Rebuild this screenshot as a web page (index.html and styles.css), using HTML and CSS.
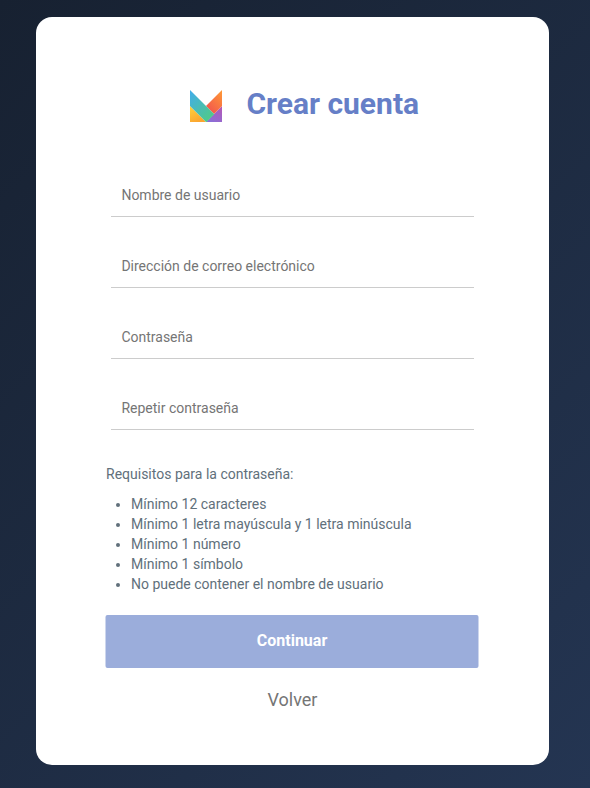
FILE: index.html
```html
<!DOCTYPE html>
<html lang="es">
<head>
<meta charset="utf-8">
<title>Crear cuenta</title>
<link rel="stylesheet" href="styles.css">
</head>
<body>
<main class="card">
  <header class="brand">
    <svg class="logo" viewBox="0 0 32 32" aria-hidden="true">
      <defs>
        <linearGradient id="band" x1="0" y1="0.1" x2="0.8" y2="1"><stop offset="0" stop-color="#42aee6"/><stop offset="1" stop-color="#50cb85"/></linearGradient>
        <linearGradient id="warm" x1="1" y1="0" x2="0.3" y2="1"><stop offset="0" stop-color="#ff9a35"/><stop offset="1" stop-color="#f2564e"/></linearGradient>
        <linearGradient id="gold" x1="0" y1="0" x2="0.5" y2="1"><stop offset="0" stop-color="#ffd33d"/><stop offset="1" stop-color="#fba52f"/></linearGradient>
        <linearGradient id="violet" x1="1" y1="0" x2="0.3" y2="1"><stop offset="0" stop-color="#b757b4"/><stop offset="1" stop-color="#8a6fd8"/></linearGradient>
      </defs>
      <path fill="url(#gold)" d="M0 16v16h16z"/>
      <path fill="url(#violet)" d="M32 16v16H16z"/>
      <path fill="url(#warm)" d="M32 0v16l-8 8-8-8z"/>
      <path fill="url(#band)" d="M0 0l24.3 24.3L16.5 32H16L0 16z"/>
    </svg>
    <h1 class="title">Crear cuenta</h1>
  </header>
  <form class="form">
    <div class="fields">
      <input class="field" type="text" placeholder="Nombre de usuario">
      <input class="field" type="email" placeholder="Dirección de correo electrónico">
      <input class="field" type="password" placeholder="Contraseña">
      <input class="field" type="password" placeholder="Repetir contraseña">
    </div>
    <section class="rules">
      <p class="rules-title">Requisitos para la contraseña:</p>
      <ul class="rules-list">
        <li>Mínimo 12 caracteres</li>
        <li>Mínimo 1 letra mayúscula y 1 letra minúscula</li>
        <li>Mínimo 1 número</li>
        <li>Mínimo 1 símbolo</li>
        <li>No puede contener el nombre de usuario</li>
      </ul>
    </section>
    <button class="submit" type="button">Continuar</button>
    <a class="back">Volver</a>
  </form>
</main>
</body>
</html>
```
FILE: styles.css
```css
* { box-sizing: border-box; }
body {
  margin: 0;
  height: 788px;
  padding: 17px 41px 23px 36px;
  overflow: hidden;
  font-family: Roboto, "Liberation Sans", sans-serif;
  background: linear-gradient(135deg, #172131 0%, #243552 100%);
}
.card {
  height: 748px;
  padding: 66px 70px 0;
  background: #fff;
  border-radius: 16px;
}
.brand {
  display: flex;
  align-items: center;
  height: 42px;
  padding-left: 84px;
}
.logo { width: 32px; height: 32px; margin-top: 4px; }
.title {
  margin: 0 0 0 24.4px;
  font-size: 30px;
  line-height: 42px;
  font-weight: 700;
  color: #667fc7;
  white-space: nowrap;
}
.form { display: flex; flex-direction: column; }
.fields {
  display: flex;
  flex-direction: column;
  gap: 28px;
  padding: 49px 5px 0;
}
.field {
  width: 100%;
  height: 43px;
  padding: 0 10px 0 10.4px;
  border: 0;
  border-bottom: 1px solid #ccc;
  background: transparent;
  font: 14px Roboto, "Liberation Sans", sans-serif;
  outline: 0;
}
.field::placeholder { color: #757575; opacity: 1; }
.rules {
  padding-top: 34px;
  font-size: 14px;
  line-height: 20px;
  color: #61707b;
}
.rules-title { margin: 0 0 10px; }
.rules-list { margin: 0; padding-left: 25px; }
.submit {
  height: 53px;
  margin: 21px 0 0;
  padding: 0 0 2px;
  border: 0;
  border-radius: 2px;
  background: #9baddb;
  color: #fff;
  font: 700 16px Roboto, "Liberation Sans", sans-serif;
  transform: translateX(-0.5px);
}
.back {
  margin-top: 20px;
  text-align: center;
  font-size: 18px;
  line-height: 24px;
  color: #757575;
}
```
